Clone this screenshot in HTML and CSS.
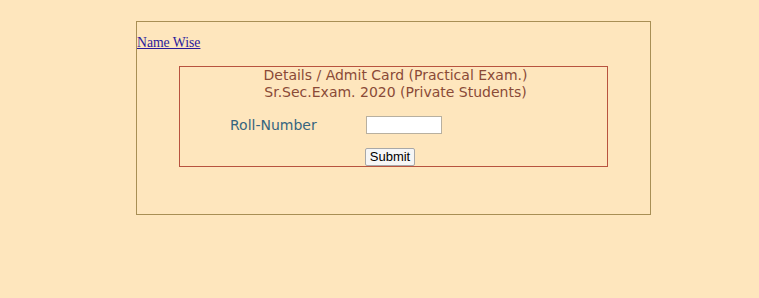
FILE: index.html
```html
<!DOCTYPE html>
<html>
<head>
<meta charset="utf-8">
<link rel="stylesheet" href="styles.css">
</head>
<body>
<div class="panel">
  <a class="namewise" href="#">Name Wise</a>
  <div class="card">
    <div class="title">Details / Admit Card (Practical Exam.)<br>Sr.Sec.Exam. 2020 (Private Students)</div>
    <div class="row">
      <span class="label">Roll-Number</span>
      <input class="field" type="text">
    </div>
    <div class="actions">
      <button class="submit" type="button">Submit</button>
    </div>
  </div>
</div>
</body>
</html>
```
FILE: styles.css
```css
html, body {
  margin: 0;
  padding: 0;
  background: #fee6bd;
}
.panel {
  box-sizing: border-box;
  margin: 21px 0 0 136px;
  width: 515px;
  height: 194px;
  border: 1px solid #a88f55;
  padding: 13px 0 0 0;
}
.namewise {
  display: block;
  font-family: "Liberation Serif", serif;
  font-size: 13.7px;
  line-height: 16px;
  color: #2a1a9c;
  text-decoration: underline;
}
.card {
  box-sizing: border-box;
  margin: 15px 0 0 42px;
  width: 429px;
  height: 101px;
  border: 1px solid #b8533f;
  font-family: "DejaVu Sans", Verdana, sans-serif;
}
.title {
  text-align: center;
  color: #8a4a37;
  font-size: 14px;
  line-height: 17px;
  padding-left: 4px;
}
.row {
  display: flex;
  align-items: center;
  margin-top: 15px;
  height: 18px;
}
.label {
  color: #36657f;
  font-size: 14px;
  margin-left: 50px;
  width: 136px;
}
.field {
  box-sizing: border-box;
  width: 76px;
  height: 18px;
  margin: 0;
  border: 1px solid #b8b0a0;
  background: #fff;
  padding: 0;
}
.actions {
  margin-top: 14px;
  padding-left: 185px;
}
.submit {
  display: block;
  box-sizing: border-box;
  height: 18px;
  width: 50px;
  margin: 0;
  padding: 0;
  font-family: "Liberation Sans", Arial, sans-serif;
  font-size: 13px;
  line-height: 16px;
  color: #000;
  background: #f6f6f6;
  border: 1px solid #a8a8a8;
  border-radius: 2px;
}
```
